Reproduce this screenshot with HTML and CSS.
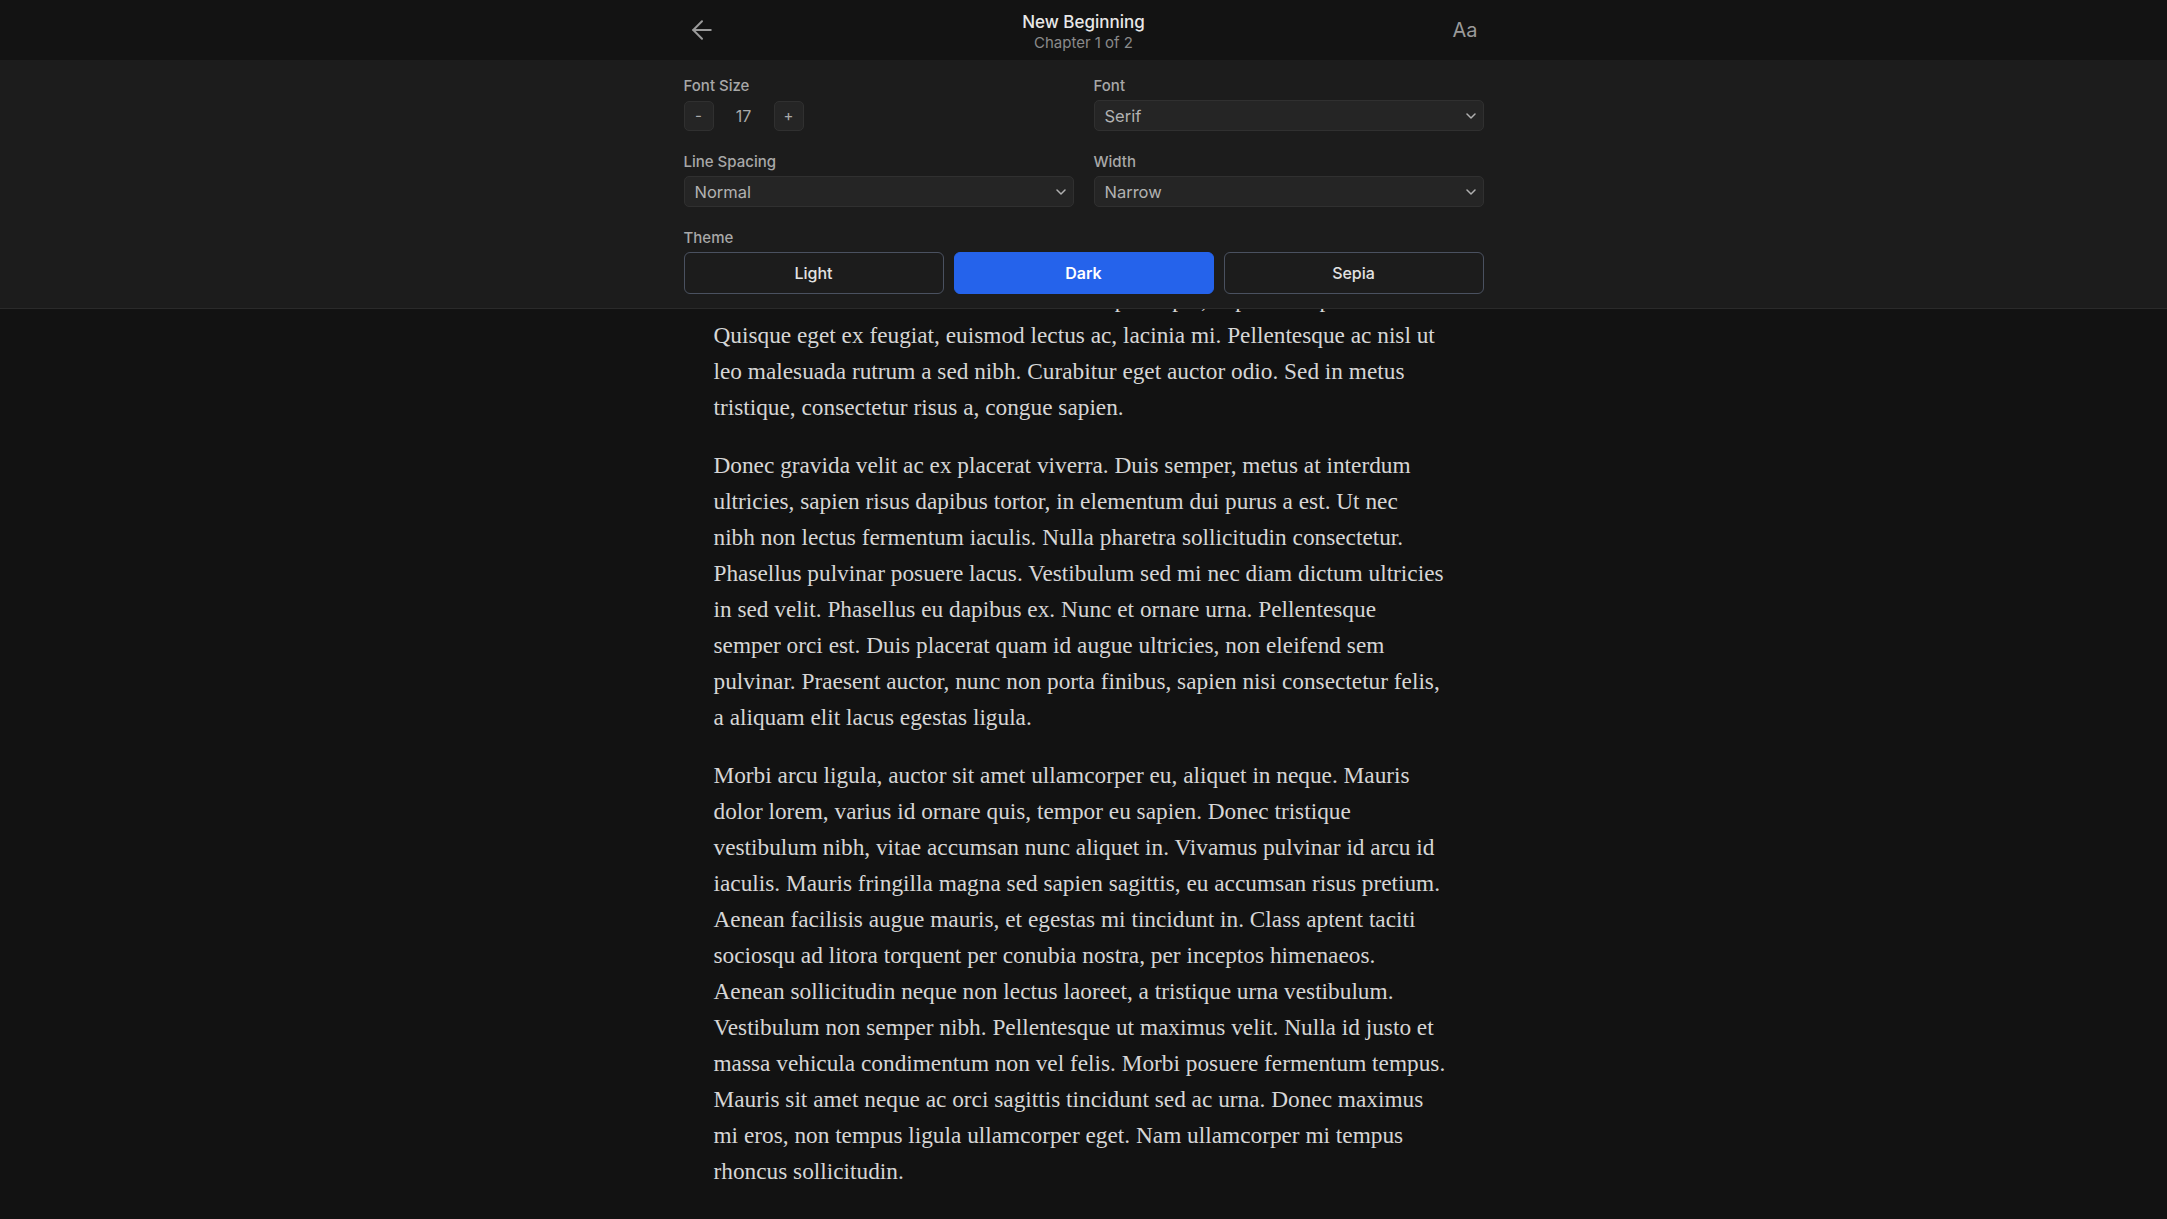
FILE: index.html
```html
<!DOCTYPE html>
<html lang="en">
<head>
  <meta charset="UTF-8" />
  <meta name="viewport" content="width=device-width, initial-scale=1.0">
  <title>New Beginning - Chapter 1</title>
  <link rel="stylesheet" href="styles.css">
</head>
<body>
  <header class="topbar">
    <div class="topbar-inner">
      <button class="icon-btn back-btn" aria-label="Back">
        <svg width="30" height="30" viewBox="0 0 24 24" fill="none" stroke="currentColor" stroke-width="1.6" stroke-linecap="round" stroke-linejoin="round"><path d="M12 19l-7-7 7-7"/><path d="M19 12H5"/></svg>
      </button>
      <div class="book-title">
        <div class="title">New Beginning</div>
        <div class="chapter-no">Chapter 1 of 2</div>
      </div>
      <button class="icon-btn font-btn">Aa</button>
    </div>
  </header>

  <!-- reader settings, lies over the text -->
  <div class="settings">
    <div class="settings-inner">
      <div class="field">
        <label>Font Size</label>
        <div class="stepper">
          <button class="step-btn">-</button>
          <span class="step-value">17</span>
          <button class="step-btn">+</button>
        </div>
      </div>
      <div class="field">
        <label>Font</label>
        <button class="select"><span>Serif</span>
          <svg width="10" height="6" viewBox="0 0 10 6" fill="none" stroke="currentColor" stroke-width="1.5" stroke-linecap="round" stroke-linejoin="round"><path d="M1 1l4 4 4-4"/></svg>
        </button>
      </div>
      <div class="field">
        <label>Line Spacing</label>
        <button class="select"><span>Normal</span>
          <svg width="10" height="6" viewBox="0 0 10 6" fill="none" stroke="currentColor" stroke-width="1.5" stroke-linecap="round" stroke-linejoin="round"><path d="M1 1l4 4 4-4"/></svg>
        </button>
      </div>
      <div class="field">
        <label>Width</label>
        <button class="select"><span>Narrow</span>
          <svg width="10" height="6" viewBox="0 0 10 6" fill="none" stroke="currentColor" stroke-width="1.5" stroke-linecap="round" stroke-linejoin="round"><path d="M1 1l4 4 4-4"/></svg>
        </button>
      </div>
      <div class="field wide">
        <label>Theme</label>
        <div class="theme-row">
          <button class="theme-btn">Light</button>
          <button class="theme-btn active">Dark</button>
          <button class="theme-btn">Sepia</button>
        </div>
      </div>
    </div>
  </div>

  <main class="chapter-text">
    <p>Vestibulum elementum ornare nisi et diam purus per, et purus ac porta eros.<br>
    Quisque eget ex feugiat, euismod lectus ac, lacinia mi. Pellentesque ac nisl ut<br>
    leo malesuada rutrum a sed nibh. Curabitur eget auctor odio. Sed in metus<br>
    tristique, consectetur risus a, congue sapien.</p>
    <p>Donec gravida velit ac ex placerat viverra. Duis semper, metus at interdum<br>
    ultricies, sapien risus dapibus tortor, in elementum dui purus a est. Ut nec<br>
    nibh non lectus fermentum iaculis. Nulla pharetra sollicitudin consectetur.<br>
    Phasellus pulvinar posuere lacus. Vestibulum sed mi nec diam dictum ultricies<br>
    in sed velit. Phasellus eu dapibus ex. Nunc et ornare urna. Pellentesque<br>
    semper orci est. Duis placerat quam id augue ultricies, non eleifend sem<br>
    pulvinar. Praesent auctor, nunc non porta finibus, sapien nisi consectetur felis,<br>
    a aliquam elit lacus egestas ligula.</p>
    <p>Morbi arcu ligula, auctor sit amet ullamcorper eu, aliquet in neque. Mauris<br>
    dolor lorem, varius id ornare quis, tempor eu sapien. Donec tristique<br>
    vestibulum nibh, vitae accumsan nunc aliquet in. Vivamus pulvinar id arcu id<br>
    iaculis. Mauris fringilla magna sed sapien sagittis, eu accumsan risus pretium.<br>
    Aenean facilisis augue mauris, et egestas mi tincidunt in. Class aptent taciti<br>
    sociosqu ad litora torquent per conubia nostra, per inceptos himenaeos.<br>
    Aenean sollicitudin neque non lectus laoreet, a tristique urna vestibulum.<br>
    Vestibulum non semper nibh. Pellentesque ut maximus velit. Nulla id justo et<br>
    massa vehicula condimentum non vel felis. Morbi posuere fermentum tempus.<br>
    Mauris sit amet neque ac orci sagittis tincidunt sed ac urna. Donec maximus<br>
    mi eros, non tempus ligula ullamcorper eget. Nam ullamcorper mi tempus<br>
    rhoncus sollicitudin.</p>
  </main>
</body>
</html>
```

FILE: styles.css
```css
:root {
  --bg: #121212;
  --bar: #131313;
  --panel: #1c1c1c;
  --field: #252525;
  --field-border: #303030;
  --muted: #a8a8a8;
  --text: #d6d6d6;
  --accent: #2563eb;
}
* { box-sizing: border-box; }
html, body { overflow: hidden; }
body {
  margin: 0;
  background: var(--bg);
  font-family: 'Inter', 'Noto Sans', sans-serif;
  color: var(--text);
}
button {
  font-family: inherit;
  cursor: pointer;
}

/* --- TOP BAR --- */
.topbar {
  height: 60px;
  background: var(--bar);
}
.topbar-inner {
  width: 800px;
  height: 100%;
  margin: 0 auto;
  display: grid;
  grid-template-columns: 1fr auto 1fr;
  align-items: center;
}
.icon-btn {
  background: none;
  border: none;
  padding: 0;
  color: #9a9a9a;
}
.back-btn {
  justify-self: start;
  margin-left: 3px;
}
.back-btn svg { display: block; }
.font-btn {
  justify-self: end;
  padding: 0 6px;
  font-size: 20px;
  line-height: 20px;
}
.book-title {
  text-align: center;
  padding-top: 3px;
}
.title {
  font-size: 17px;
  line-height: 22px;
  font-weight: 500;
  color: #e8e8e8;
}
.chapter-no {
  font-size: 15px;
  line-height: 20px;
  color: #8a8a8a;
}

/* --- SETTINGS PANEL --- */
.settings {
  position: absolute;
  top: 60px;
  left: 0;
  right: 0;
  background: var(--panel);
  border-bottom: 1px solid #2a2a2a;
  padding: 16px 0 14px;
}
.settings-inner {
  width: 800px;
  margin: 0 auto;
  display: grid;
  grid-template-columns: 1fr 1fr;
  column-gap: 20px;
  row-gap: 21px;
}
.field.wide { grid-column: 1 / 3; }
.field label {
  display: block;
  font-size: 15px;
  line-height: 20px;
  font-weight: 500;
  color: var(--muted);
  margin-bottom: 4px;
}
.stepper {
  display: flex;
  align-items: center;
  height: 31px;
}
.step-btn {
  width: 30px;
  height: 30px;
  padding: 0;
  background: var(--field);
  border: 1px solid var(--field-border);
  border-radius: 5px;
  color: #aaa;
  font-size: 15px;
}
.step-value {
  width: 44px;
  margin: 0 8px;
  text-align: center;
  font-size: 16px;
  color: #aaa;
}
.select {
  width: 100%;
  height: 31px;
  display: flex;
  align-items: center;
  justify-content: space-between;
  padding: 0 7px 0 10px;
  background: var(--field);
  border: 1px solid var(--field-border);
  border-radius: 5px;
  color: #b2b2b2;
  font-size: 16.5px;
  text-align: left;
}
.select svg { color: #b0b0b0; }
.theme-row {
  display: grid;
  grid-template-columns: repeat(3, 1fr);
  gap: 10px;
}
.theme-btn {
  height: 42px;
  background: transparent;
  border: 1px solid #4a5160;
  border-radius: 6px;
  color: #e2e2e2;
  font-size: 16px;
  font-weight: 500;
}
.theme-btn.active {
  background: var(--accent);
  border-color: var(--accent);
  color: #fff;
  font-weight: 600;
}

/* --- CHAPTER TEXT --- */
.chapter-text {
  width: 740px;
  margin: 0 auto;
  padding: 221px 0 20px;
  font-family: 'Liberation Serif', 'Times New Roman', serif;
  font-size: 23.3px;
  line-height: 36px;
  color: var(--text);
}
.chapter-text p {
  margin: 0 0 22px;
}
.chapter-text p:last-child { margin-bottom: 0; }
```
